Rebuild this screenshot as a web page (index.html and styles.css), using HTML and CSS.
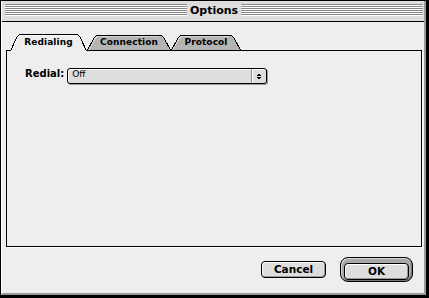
FILE: index.html
```html
<!DOCTYPE html>
<html lang="en">
<head>
  <meta charset="UTF-8" />
  <title>Options</title>
  <link rel="stylesheet" href="styles.css">
</head>
<body>
  <div class="window">
    <div class="frame">
      <div class="titlebar">
        <div class="stripes"></div>
        <div class="title">Options</div>
        <div class="stripes"></div>
      </div>

      <div class="content">
        <div class="tabs">
          <div class="tab selected tab-redial">
            <svg class="tab-shape" viewBox="0 0 77 18" shape-rendering="crispEdges">
              <path class="fill" d="M0.5,18 L6.5,5 C7.5,2.5 9,1.5 11.5,1.5 L65.5,1.5 C68,1.5 69.5,2.5 70.5,5 L76.5,18 Z"/>
              <path class="hi" d="M1.5,18 L7.5,5.5 C8.3,3.5 9.5,2.5 11.5,2.5 L65,2.5"/>
              <path class="line" d="M0.5,18 L6.5,5 C7.5,2.5 9,1.5 11.5,1.5 L65.5,1.5 C68,1.5 69.5,2.5 70.5,5 L76.5,18"/>
            </svg>
            <span>Redialing</span>
          </div>
          <div class="tab tab-conn">
            <svg class="tab-shape" viewBox="0 0 84 18" shape-rendering="crispEdges">
              <path class="fill" d="M0.5,17 L6.5,6 C7.5,3.5 9,2.5 11.5,2.5 L72.5,2.5 C75,2.5 76.5,3.5 77.5,6 L83.5,17 Z"/>
              <path class="hi" d="M1.8,17 L7.5,6.5 C8.3,4.5 9.5,3.5 11.5,3.5 L72,3.5"/>
              <path class="line" d="M0.5,17 L6.5,6 C7.5,3.5 9,2.5 11.5,2.5 L72.5,2.5 C75,2.5 76.5,3.5 77.5,6 L83.5,17"/>
            </svg>
            <span>Connection</span>
          </div>
          <div class="tab tab-proto">
            <svg class="tab-shape" viewBox="0 0 70 18" shape-rendering="crispEdges">
              <path class="fill" d="M0.5,17 L6.5,6 C7.5,3.5 9,2.5 11.5,2.5 L58.5,2.5 C61,2.5 62.5,3.5 63.5,6 L69.5,17 Z"/>
              <path class="hi" d="M1.8,17 L7.5,6.5 C8.3,4.5 9.5,3.5 11.5,3.5 L58,3.5"/>
              <path class="line" d="M0.5,17 L6.5,6 C7.5,3.5 9,2.5 11.5,2.5 L58.5,2.5 C61,2.5 62.5,3.5 63.5,6 L69.5,17"/>
            </svg>
            <span>Protocol</span>
          </div>
        </div>

        <div class="panel">
          <div class="field">
            <label class="field-label">Redial:</label>
            <div class="popup">
              <span class="popup-value">Off</span>
              <span class="popup-arrows">
                <svg width="14" height="14" viewBox="0 0 14 14" shape-rendering="crispEdges">
                  <path d="M7,4 L9.5,7 L4.5,7 Z" fill="#000"/>
                  <path d="M4.5,8 L9.5,8 L7,11 Z" fill="#000"/>
                </svg>
              </span>
            </div>
          </div>
        </div>

        <div class="buttons">
          <button class="btn">Cancel</button>
          <div class="default-ring">
            <button class="btn">OK</button>
          </div>
        </div>
      </div>
    </div>
  </div>
</body>
</html>
```

FILE: styles.css
```css
body {
  margin: 0;
  background: #fff;
}

.window {
  width: 429px;
  height: 298px;
  box-sizing: border-box;
  border-style: solid;
  border-color: #000;
  border-width: 1px 3px 3px 1px;
}

.frame {
  height: 100%;
  box-sizing: border-box;
  display: flex;
  flex-direction: column;
  border-left: 1px solid #fff;
  border-right: 2px solid #999;
  border-bottom: 2px solid #999;
}

/* title bar */
.titlebar {
  height: 21px;
  box-sizing: border-box;
  display: flex;
  align-items: flex-start;
  padding: 0 1px 0 3px;
  background: #dddddd;
  border-bottom: 1px solid #000;
}

.stripes {
  flex: 1;
  height: 12px;
  margin-top: 3px;
  background: repeating-linear-gradient(to bottom, #888 0 1px, #fff 1px 2px);
}

.title {
  padding: 0 3px;
  font-family: "DejaVu Sans", sans-serif;
  font-weight: bold;
  font-size: 11px;
  line-height: 20px;
  color: #000;
}

/* dialog body */
.content {
  flex: 1;
  display: flex;
  flex-direction: column;
  padding: 11px 2px 0 4px;
  background: #eeeeee;
}

.tabs {
  display: flex;
  height: 18px;
  padding-left: 4px;
  margin-bottom: -1px;
  position: relative;
  z-index: 1;
}

.tab {
  position: relative;
  height: 18px;
  text-align: center;
  font-family: "DejaVu Sans", sans-serif;
  font-weight: bold;
  font-size: 9px;
  letter-spacing: 0.1px;
  color: #000;
  box-sizing: border-box;
  padding-top: 1px;
  line-height: 17px;
}

.tab span {
  position: relative;
}

.tab-redial { width: 77px; }
.tab-conn { width: 84px; }
.tab-proto { width: 70px; }

.tab-shape {
  position: absolute;
  left: 0;
  top: 0;
  width: 100%;
  height: 100%;
}

.tab-shape .fill {
  fill: #b4b4b4;
  stroke: none;
}

.tab-shape .hi {
  fill: none;
  stroke: #d6d6d6;
  stroke-width: 1;
}

.tab-shape .line {
  fill: none;
  stroke: #000;
  stroke-width: 1;
}

.selected .tab-shape .fill {
  fill: #eeeeee;
}

.selected .tab-shape .hi {
  stroke: #fff;
}

.panel {
  height: 197px;
  box-sizing: border-box;
  border: 1px solid #000;
  background: #eeeeee;
  box-shadow: 1px 1px 0 #fff;
  padding: 17px 18px;
}

.field {
  display: flex;
  align-items: flex-start;
  gap: 3px;
}

.field-label {
  font-family: "DejaVu Sans", sans-serif;
  font-weight: bold;
  font-size: 10px;
  line-height: 10px;
  margin-top: 1px;
  color: #000;
}

.popup {
  width: 200px;
  height: 16px;
  box-sizing: border-box;
  display: flex;
  border: 1px solid #000;
  border-radius: 3px;
  background: #dddddd;
  box-shadow: inset 1px 1px 0 #fff, 1px 1px 0 #999;
}

.popup-value {
  flex: 1;
  padding-left: 4px;
  font-family: "DejaVu Sans", sans-serif;
  font-size: 9px;
  line-height: 10px;
  color: #000;
}

.popup-arrows {
  width: 14px;
  border-left: 1px solid #888;
  box-shadow: inset 1px 0 0 #fff;
  display: flex;
}

/* push buttons */
.buttons {
  display: flex;
  justify-content: flex-end;
  align-items: center;
  gap: 14px;
  margin-top: 10px;
  padding-right: 9px;
}

.btn {
  width: 65px;
  height: 17px;
  box-sizing: border-box;
  padding: 0;
  border: 1px solid #000;
  border-radius: 4px;
  background: #dddddd;
  box-shadow: inset 1px 1px 0 #fff, inset -1px -1px 0 #999;
  font-family: "DejaVu Sans", sans-serif;
  font-weight: bold;
  font-size: 10.5px;
  line-height: 15px;
  color: #000;
}

.default-ring {
  width: 73px;
  height: 25px;
  box-sizing: border-box;
  padding: 3px;
  border: 1px solid #000;
  border-radius: 8px;
  background: #a8a8a8;
  box-shadow: inset 1px 1px 0 #d8d8d8, inset -1px -1px 0 #777;
}

.default-ring .btn {
  width: 65px;
}
```
